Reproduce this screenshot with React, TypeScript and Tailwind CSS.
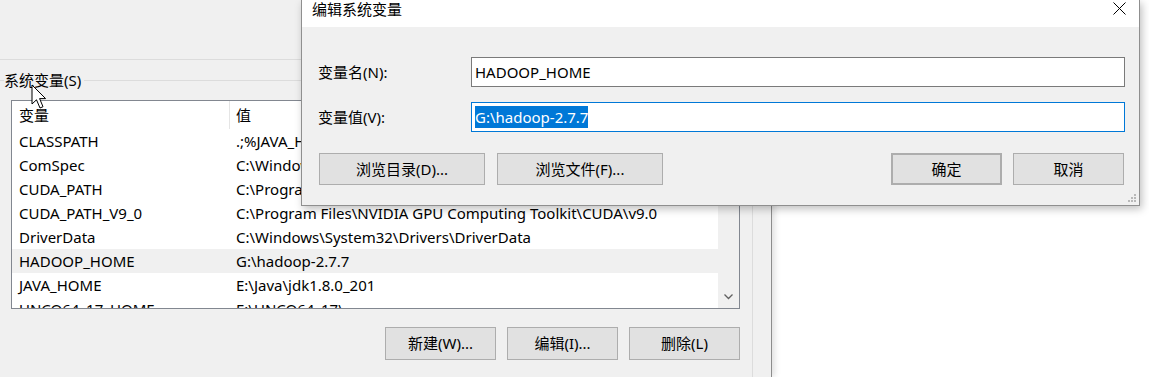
import React from 'react';

type Row = { name: string; value: string };

const rows: Row[] = [
  { name: 'CLASSPATH', value: '.;%JAVA_HOME%\\lib;%JAVA_HOME%\\lib\\tools.jar' },
  { name: 'ComSpec', value: 'C:\\Windows\\system32\\cmd.exe' },
  { name: 'CUDA_PATH', value: 'C:\\Program Files\\NVIDIA GPU Computing Toolkit\\CUDA\\v9.0' },
  { name: 'CUDA_PATH_V9_0', value: 'C:\\Program Files\\NVIDIA GPU Computing Toolkit\\CUDA\\v9.0' },
  { name: 'DriverData', value: 'C:\\Windows\\System32\\Drivers\\DriverData' },
  { name: 'HADOOP_HOME', value: 'G:\\hadoop-2.7.7' },
  { name: 'JAVA_HOME', value: 'E:\\Java\\jdk1.8.0_201' },
  { name: 'UNCO64_17_HOME', value: 'E:\\UNCO64_17\\' },
];

function WinButton({ label, className = '' }: { label: string; className?: string }) {
  return (
    <div className={`flex items-center justify-center border border-[#adadad] bg-[#e1e1e1] text-[15px] text-black ${className}`}>
      {label}
    </div>
  );
}

function Cursor() {
  return (
    <svg className="absolute left-[31px] top-[84px]" width="17" height="26" viewBox="0 0 17 26">
      <path
        d="M1 1 L1 20 L5.5 15.8 L9 24 L12 22.7 L8.6 14.6 L14.6 14.6 Z"
        fill="#fff"
        stroke="#000"
        strokeWidth="1"
        strokeLinejoin="miter"
      />
    </svg>
  );
}

function EditDialog() {
  return (
    <div className="absolute left-[301px] top-0 flex h-[206px] w-[839px] flex-col border-x border-b border-[#8f8f8f] bg-[#f0f0f0] shadow-[2px_3px_8px_rgba(0,0,0,0.25)]">
      <div className="flex h-[27px] items-start justify-between bg-white pl-[10px] pr-[13px]">
        <span className="pt-[1px] leading-[17px] text-[15px] text-black">编辑系统变量</span>
        <svg className="mt-[2px]" width="13" height="13" viewBox="0 0 13 13">
          <path d="M0.5 0.5 L12.5 12.5 M12.5 0.5 L0.5 12.5" stroke="#000" strokeWidth="1" />
        </svg>
      </div>

      <div className="mt-[30px] flex h-[30px] items-center pl-[16px] pr-[14px]">
        <span className="w-[153px] text-[15px] text-black">变量名(N):</span>
        <div className="flex h-[30px] flex-1 items-center border border-[#7a7a7a] bg-white pl-[3px] text-[15px] text-black">
          HADOOP_HOME
        </div>
      </div>

      <div className="mt-[15px] flex h-[30px] items-center pl-[16px] pr-[14px]">
        <span className="w-[153px] text-[15px] text-black">变量值(V):</span>
        <div className="flex h-[30px] flex-1 items-center border border-[#0078d7] bg-white pl-[3px] text-[15px]">
          <span className="bg-[#0078d7] leading-[22px] text-white">{'G:\\hadoop-2.7.7'}</span>
        </div>
      </div>

      <div className="mt-[21px] flex h-[32px] pl-[17px] pr-[15px]">
        <WinButton label="浏览目录(D)..." className="h-[32px] w-[166px]" />
        <WinButton label="浏览文件(F)..." className="ml-[12px] h-[32px] w-[166px]" />
        <WinButton label="确定" className="ml-auto h-[32px] w-[111px] border-2 border-[#0078d7]" />
        <WinButton label="取消" className="ml-[11px] h-[32px] w-[111px]" />
      </div>

      <svg className="absolute bottom-[2px] right-[2px]" width="10" height="10" viewBox="0 0 10 10">
        <g fill="#b8b8b8">
          <rect x="7" y="1" width="2" height="2" />
          <rect x="4" y="4" width="2" height="2" />
          <rect x="7" y="4" width="2" height="2" />
          <rect x="1" y="7" width="2" height="2" />
          <rect x="4" y="7" width="2" height="2" />
          <rect x="7" y="7" width="2" height="2" />
        </g>
      </svg>
    </div>
  );
}

export default function App() {
  return (
    <div className="relative flex h-[377px] w-[1149px] overflow-hidden bg-white font-['Noto_Sans','Noto_Sans_CJK_SC',sans-serif] text-black">
      {/* background: 环境变量 window */}
      <div className="flex h-full w-[772px] flex-col border-r border-[#8c8c8c] bg-[#f0f0f0] shadow-[3px_0_6px_rgba(0,0,0,0.12)]">
        <div className="h-[60px] shrink-0 border-b border-[#dcdcdc]" />

        <div className="mt-[20px] flex w-[753px] flex-1 flex-col border-r border-t border-[#dcdcdc]">
          <div className="-mt-[10px] ml-[4px] w-fit bg-[#f0f0f0] pr-[3px] text-[15px] leading-[19px]">系统变量(S)</div>

          <div className="ml-[11px] mt-[10px] flex h-[209px] w-[729px] overflow-hidden border border-[#828790] bg-white">
            <div className="flex flex-1 flex-col">
              <div className="flex h-[28px] shrink-0 items-center text-[15px]">
                <div className="flex h-full w-[218px] items-center border-r border-[#e5e5e5] pl-[7px]">变量</div>
                <div className="pl-[6px]">值</div>
              </div>
              {rows.map((r) => (
                <div
                  key={r.name}
                  className={`flex h-[24px] shrink-0 items-center whitespace-nowrap text-[15px] ${
                    r.name === 'HADOOP_HOME' ? 'bg-[#f0f0f0]' : ''
                  }`}
                >
                  <div className="w-[218px] pl-[7px]">{r.name}</div>
                  <div className="pl-[6px]">{r.value}</div>
                </div>
              ))}
            </div>
            <div className="flex w-[21px] flex-col justify-end bg-[#f0f0f0] pb-[8px]">
              <svg className="mx-auto" width="9" height="6" viewBox="0 0 9 6">
                <path d="M0.5 0.5 L4.5 4.5 L8.5 0.5" fill="none" stroke="#606060" strokeWidth="1.3" />
              </svg>
            </div>
          </div>

          <div className="mt-[18px] flex justify-end pr-[12px]">
            <WinButton label="新建(W)..." className="h-[33px] w-[111px]" />
            <WinButton label="编辑(I)..." className="ml-[11px] h-[33px] w-[111px]" />
            <WinButton label="删除(L)" className="ml-[11px] h-[33px] w-[111px]" />
          </div>
        </div>
      </div>

      <EditDialog />
      <Cursor />
    </div>
  );
}
